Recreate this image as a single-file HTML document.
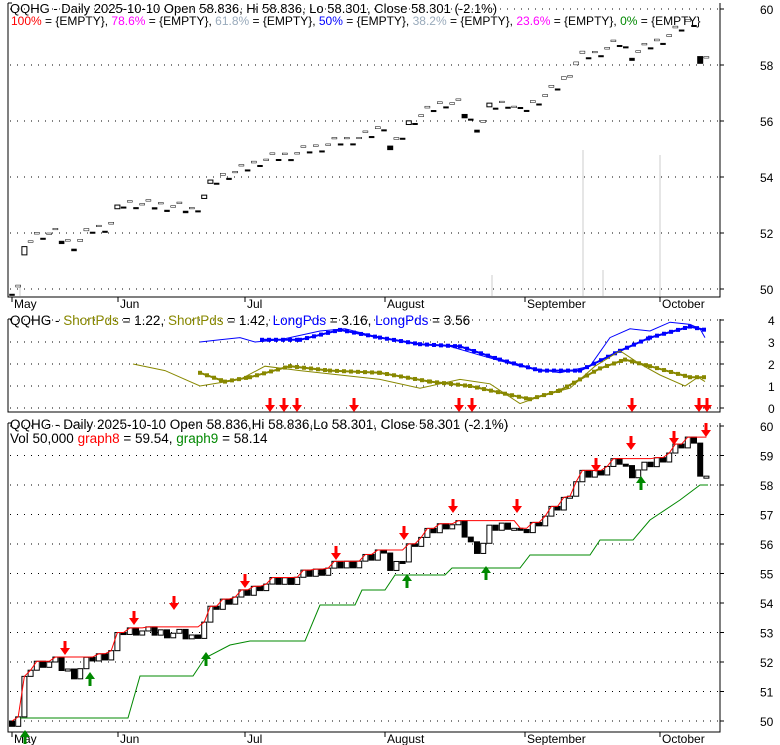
<!DOCTYPE html>
<html><head><meta charset="utf-8"><style>
body{margin:0;background:#fff;}
svg{display:block;font-family:"Liberation Sans",Arial,sans-serif;font-size:12px;}
</style></head><body>
<svg id="s" width="780" height="745" xmlns="http://www.w3.org/2000/svg">
<rect width="780" height="745" fill="#fff"/>
<g id="g"></g>
<text x="10" y="13" font-size="13">QQHG - Daily 2025-10-10 Open 58.836, Hi 58.836, Lo 58.301, Close 58.301 (-2.1%)</text>
<text x="11" y="25"><tspan fill="#f00">100%</tspan> = {EMPTY}, <tspan fill="#f0f">78.6%</tspan> = {EMPTY}, <tspan fill="#9ab">61.8%</tspan> = {EMPTY}, <tspan fill="#00f">50%</tspan> = {EMPTY}, <tspan fill="#9ab">38.2%</tspan> = {EMPTY}, <tspan fill="#f0f">23.6%</tspan> = {EMPTY}, <tspan fill="#080">0%</tspan> = {EMPTY}</text>
<text x="10" y="325" font-size="13.5">QQHG - <tspan fill="#880">ShortPds</tspan> = 1.22, <tspan fill="#880">ShortPds</tspan> = 1.42, <tspan fill="#00f">LongPds</tspan> = 3.16, <tspan fill="#00f">LongPds</tspan> = 3.56</text>
<text x="10" y="429" font-size="13.5">QQHG - Daily 2025-10-10 Open 58.836,Hi 58.836,Lo 58.301, Close 58.301 (-2.1%)</text>
<text x="10" y="443" font-size="13.5">Vol 50,000 <tspan fill="#f00">graph8</tspan> = 59.54, <tspan fill="#080">graph9</tspan> = 58.14</text>
</svg>
<script>
var g=document.getElementById('g'),h='';
function L(a){h+=a;}
L('<path d="M8 3V297H720V3" fill="none" stroke="#000"/>');
L('<path d="M8 319V412H720V319" fill="none" stroke="#000"/>');
L('<path d="M8 423V732H720V423" fill="none" stroke="#000"/>');
L('<path d="M8 3h4M8 319h4M8 423h4" stroke="#000"/>');
function grid(y){L('<line x1="10" x2="718" y1="'+y+'" y2="'+y+'" stroke="#000" stroke-dasharray="1 6"/>');}
for(var v=50;v<=60;v+=2){var y=289-(v-50)*28;grid(y);L('<line x1="720" x2="724" y1="'+y+'" y2="'+y+'" stroke="#000"/><text x="760" y="'+(y+5)+'" font-size="12">'+v+'</text>');}
for(var v=0;v<=4;v++){var y=408-v*22;grid(y);L('<line x1="720" x2="724" y1="'+y+'" y2="'+y+'" stroke="#000"/><text x="768" y="'+(y+5)+'">'+v+'</text>');}
for(var v=50;v<=60;v++){var y=721-(v-50)*29.5;grid(y);L('<line x1="720" x2="724" y1="'+y+'" y2="'+y+'" stroke="#000"/><text x="760" y="'+(y+5)+'">'+v+'</text>');}
var m=[[12,'May'],[118,'Jun'],[245,'Jul'],[385,'August'],[525,'September'],[660,'October']];
m.forEach(function(a){L('<line x1="'+a[0]+'" x2="'+a[0]+'" y1="297" y2="302" stroke="#000"/><text x="'+(a[0]+2)+'" y="308">'+a[1]+'</text>');
L('<line x1="'+a[0]+'" x2="'+a[0]+'" y1="732" y2="737" stroke="#000"/><text x="'+(a[0]+2)+'" y="743">'+a[1]+'</text>');});
[[583,150],[660,155],[492,275],[603,270],[20,285]].forEach(function(a){L('<line x1="'+a[0]+'" x2="'+a[0]+'" y1="'+a[1]+'" y2="296" stroke="#ccc"/>');});
var kp=[[12,50.0],[18,50.1],[24,51.3],[30,51.8],[40,52.0],[55,52.0],[65,51.7],[75,51.6],[90,52.1],[110,52.3],[120,53.0],[135,53.1],[150,53.0],[170,53.0],[195,52.8],[210,53.7],[225,54.1],[245,54.3],[260,54.6],[290,54.8],[330,55.2],[370,55.5],[385,55.9],[390,55.1],[400,55.3],[410,56.0],[430,56.4],[445,56.7],[460,56.6],[470,56.0],[480,55.8],[490,56.5],[510,56.7],[520,56.3],[535,56.7],[560,57.3],[580,58.3],[595,58.4],[605,58.6],[620,58.8],[630,58.4],[645,58.6],[665,59.0],[680,59.3],[690,59.6],[700,59.6],[707,58.3]];
function ip(x){for(var i=1;i<kp.length;i++){if(x<=kp[i][0]){var a=kp[i-1],b=kp[i];return a[1]+(b[1]-a[1])*(x-a[0])/(b[0]-a[0]);}}return kp[kp.length-1][1];}
var prev=50.0,red='',rmax=0,rcnt=0;
for(var i=0;i<=112;i++){var x=12+i*6.2;if(x>708)break;var c=ip(x)+((i*7)%5-2)*0.09;
if(x>700)c=58.3;
var o=prev;var up=c>=o;
var y1=721-(Math.max(o,c)-50)*29.5,y2=721-(Math.min(o,c)-50)*29.5;if(y2-y1<2)y2=y1+2;
L('<rect x="'+(x-2.5)+'" y="'+y1+'" width="5" height="'+(y2-y1)+'" fill="'+(up?'#fff':'#000')+'" stroke="#000"/>');
var ty=289-(c-50)*28;var th=Math.max(1.5,Math.abs(c-o)*6);
L('<rect x="'+(x-2.5)+'" y="'+ty+'" width="5" height="'+th+'" fill="'+(up?'#fff':'#000')+'" stroke="#000" stroke-width="'+(th>3?1:0.5)+'"/>');
var hi=Math.max(o,c);
if(hi>rmax||rcnt>8){rmax=hi;rcnt=0;}else rcnt++;
red+=(i?'L':'M')+x+' '+(721-(rmax-50)*29.5);
prev=c;}
L('<path d="'+red+'" fill="none" stroke="#f00" stroke-width="1"/>');
L('<path d="M20 718H128L140 676H193L205 658L230 645L250 641H305L320 605H355L362 590H385L395 575H445L452 568H520L530 555H590L600 540H633L650 520L680 500L700 485H708" fill="none" stroke="#080"/>');
function ln(pts,col,w,sq){var d='';pts.forEach(function(p,i){d+=(i?'L':'M')+p[0]+' '+(408-p[1]*22);});L('<path d="'+d+'" fill="none" stroke="'+col+'" stroke-width="'+w+'"/>');
if(sq){for(var i=1;i<pts.length;i++){var a=pts[i-1],b=pts[i];for(var x=a[0];x<b[0];x+=7){var v=a[1]+(b[1]-a[1])*(x-a[0])/(b[0]-a[0]);L('<rect x="'+(x-2)+'" y="'+(406-v*22)+'" width="4" height="4" fill="'+col+'"/>');}}}}
ln([[200,3.0],[220,3.1],[240,3.2],[255,3.0],[280,3.1],[320,3.5],[345,3.6],[380,3.2],[420,2.9],[450,2.8],[480,2.4],[520,1.9],[560,1.6],[590,1.9],[610,3.2],[630,3.6],[650,3.5],[670,3.9],[690,3.8],[700,3.6],[705,3.2]],'#00f',1,false);
ln([[262,3.1],[300,3.1],[340,3.55],[380,3.2],[420,2.9],[460,2.8],[500,2.2],[540,1.7],[580,1.7],[620,2.6],[650,3.2],[690,3.7],[705,3.55]],'#00f',2,true);
ln([[133,2.0],[165,1.7],[200,1.0],[240,1.3],[265,1.9],[300,1.7],[340,1.5],[380,1.3],[420,0.9],[460,1.3],[490,1.1],[520,0.2],[545,0.6],[570,0.9],[595,1.9],[620,2.6],[640,2.0],[660,1.5],[685,1.0],[698,1.4],[705,1.2]],'#880',1,false);
ln([[200,1.6],[225,1.2],[250,1.4],[290,1.9],[330,1.7],[380,1.6],[430,1.2],[470,1.0],[530,0.4],[560,0.8],[580,1.3],[600,1.8],[625,2.2],[650,1.9],[690,1.4],[705,1.4]],'#880',2,true);
function da(x,y){L('<path d="M'+(x-1.5)+' '+(y-14)+'h3v7h3.5l-5 7l-5 -7h3.5z" fill="#f00"/>');}
function ua(x,y){L('<path d="M'+(x-1.5)+' '+(y+14)+'h3v-7h3.5l-5 -7l-5 7h3.5z" fill="#080"/>');}
[270,284,297,354,459,472,632,699,707].forEach(function(x){da(x,412);});
[[65,655],[134,625],[174,610],[245,588],[336,560],[404,540],[453,513],[517,513],[596,472],[631,450],[674,445],[706,437]].forEach(function(a){da(a[0],a[1]);});
[[25,730],[90,672],[206,652],[407,574],[486,566],[641,476]].forEach(function(a){ua(a[0],a[1]);});
g.innerHTML=h;
</script>
</body></html>
